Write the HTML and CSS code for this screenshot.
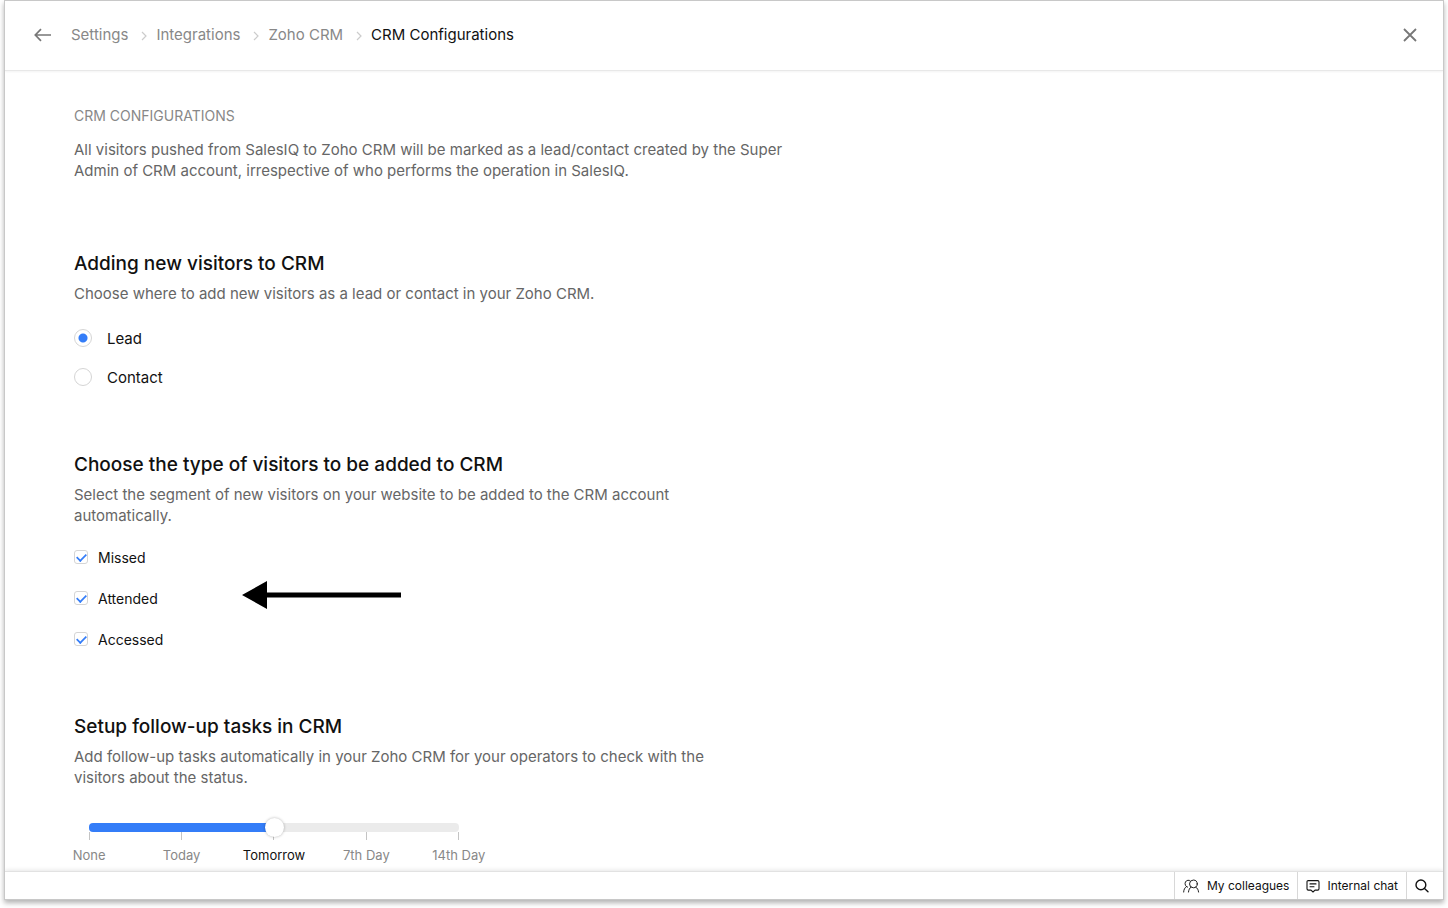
FILE: index.html
```html
<!DOCTYPE html>
<html lang="en">
<head>
    <meta charset="UTF-8">
    <meta name="viewport" content="width=device-width, initial-scale=1.0">
    <title>CRM Configurations</title>
    <link rel="stylesheet" href="styles.css">
</head>
<body>
    <div class="window">
        <header class="topbar">
            <button class="icon-btn" type="button" aria-label="Back">
                <svg width="18" height="14" viewBox="0 0 18 14" fill="none" stroke="currentColor" stroke-width="1.7"><path d="M17 7H1.5M7 1.2L1.3 7L7 12.8"/></svg>
            </button>
            <nav class="breadcrumb" aria-label="Breadcrumb">
                <a href="#">Settings</a>
                <svg class="sep" width="6" height="10" viewBox="0 0 6 10"><path d="M1 1l4 4-4 4"/></svg>
                <a href="#">Integrations</a>
                <svg class="sep" width="6" height="10" viewBox="0 0 6 10"><path d="M1 1l4 4-4 4"/></svg>
                <a href="#">Zoho CRM</a>
                <svg class="sep" width="6" height="10" viewBox="0 0 6 10"><path d="M1 1l4 4-4 4"/></svg>
                <span class="current">CRM Configurations</span>
            </nav>
            <button class="icon-btn close" type="button" aria-label="Close">
                <svg width="14" height="14" viewBox="0 0 14 14" fill="none" stroke="currentColor" stroke-width="1.8"><path d="M1 1l12 12M13 1L1 13"/></svg>
            </button>
        </header>

        <main class="content">
            <section class="intro">
                <h1>CRM CONFIGURATIONS</h1>
                <p>All visitors pushed from SalesIQ to Zoho CRM will be marked as a lead/contact created by the Super Admin of CRM account, irrespective of who performs the operation in SalesIQ.</p>
            </section>

            <section class="setting">
                <h2>Adding new visitors to CRM</h2>
                <p>Choose where to add new visitors as a lead or contact in your Zoho CRM.</p>
                <div class="options radios">
                    <label><input type="radio" name="addAs" checked>Lead</label>
                    <label><input type="radio" name="addAs">Contact</label>
                </div>
            </section>

            <section class="setting">
                <h2>Choose the type of visitors to be added to CRM</h2>
                <p>Select the segment of new visitors on your website to be added to the CRM account automatically.</p>
                <div class="options checks">
                    <label><input type="checkbox" checked>Missed</label>
                    <label><input type="checkbox" checked>Attended</label>
                    <label><input type="checkbox" checked>Accessed</label>
                    <svg class="pointer" width="159" height="28" viewBox="0 0 159 28"><path d="M0 14L25 0v11.500h134v5H25V28z"/></svg>
                </div>
            </section>

            <section class="setting">
                <h2 id="followup">Setup follow-up tasks in CRM</h2>
                <p>Add follow-up tasks automatically in your Zoho CRM for your operators to check with the visitors about the status.</p>
                <div class="slider">
                    <input type="range" min="0" max="4" value="2" aria-labelledby="followup">
                    <ul class="ticks">
                        <li>None</li>
                        <li>Today</li>
                        <li class="active">Tomorrow</li>
                        <li>7th Day</li>
                        <li>14th Day</li>
                    </ul>
                </div>
            </section>
        </main>

        <footer class="bottombar">
            <button type="button">
                <svg width="17" height="14" viewBox="0 0 18 14" fill="none" stroke="currentColor" stroke-width="1" stroke-linecap="round"><circle cx="11" cy="4.800" r="4.100"/><path d="M5.800 13.400C6 11 7 9.300 8.500 8.100M13.500 8.100c1.700 1.200 2.800 2.900 3 5.300M6.800 1C4.300.3 2.200 2 2.200 4.500c0 1.300.6 2.400 1.500 3.100C1.900 8.800.8 10.700.7 13.400M3.700 7.600l1.200.6"/></svg>
                My colleagues
            </button>
            <button type="button">
                <svg width="14" height="14" viewBox="0 0 14 14" fill="none" stroke="currentColor" stroke-width="1.100" stroke-linecap="round" stroke-linejoin="round"><path d="M2.300 1.600h9.400a1.300 1.300 0 0 1 1.300 1.300v6.900a1.300 1.300 0 0 1-1.300 1.300H9L7 13l-2-1.900H2.300A1.300 1.300 0 0 1 1 9.800V2.900a1.300 1.300 0 0 1 1.300-1.300zM4 4.900h6M4 7.700h4"/></svg>
                Internal chat
            </button>
            <button class="search" type="button" aria-label="Search">
                <svg width="14" height="14" viewBox="0 0 14 14" fill="none" stroke="currentColor" stroke-width="1.400" stroke-linecap="round"><circle cx="5.900" cy="5.900" r="4.900"/><path d="M9.500 9.500l3.500 3.300"/></svg>
            </button>
        </footer>
    </div>
</body>
</html>
```
FILE: styles.css
```css
* {
    box-sizing: border-box;
}
body {
    margin: 0;
    background: #fff;
    color: #111;
    font-family: Inter, "Liberation Sans", sans-serif;
    font-size: 15px;
    line-height: 21px;
}
h1, h2, p, ul {
    margin: 0;
    padding: 0;
}
button {
    font: inherit;
    color: inherit;
    background: none;
    border: none;
    padding: 0;
    cursor: pointer;
}
svg {
    display: block;
    flex: none;
}

.window {
    display: flex;
    flex-direction: column;
    height: calc(100vh - 8px);
    margin: 0 4px 8px;
    border: 1px solid #c8c8c8;
    box-shadow: 0 3px 5px rgba(0, 0, 0, 0.3);
    overflow: hidden;
}

/* top bar */
.topbar {
    display: flex;
    align-items: center;
    flex: none;
    height: 70px;
    padding: 0 26px 2px 29px;
    border-bottom: 1px solid #e8e8e8;
    box-shadow: 0 1px 2px rgba(0, 0, 0, 0.05);
}
.icon-btn {
    color: #777;
}
.close {
    margin-left: auto;
}
.breadcrumb {
    display: flex;
    align-items: center;
    margin-left: 19px;
}
.breadcrumb a {
    color: #888;
    text-decoration: none;
}
.sep {
    margin: 2px 9px 0 13px;
    fill: none;
    stroke: #ccc;
    stroke-width: 1.2;
}

/* content */
.content {
    flex: 1;
    min-height: 0;
    overflow: hidden;
    padding: 34px 69px 0;
}
.content p {
    max-width: 730px;
    color: #666;
}
.intro h1 {
    margin-bottom: 13px;
    font-size: 14px;
    font-weight: 400;
    color: #888;
}
.intro {
    padding-bottom: 5px;
}
.setting {
    margin-top: 64px;
}
.setting h2 {
    margin-bottom: 5px;
    font-size: 19px;
    line-height: 28px;
    font-weight: 500;
}
.setting p {
    max-width: 660px;
}
.options {
    display: flex;
    flex-direction: column;
    align-items: flex-start;
    position: relative;
}
.options label {
    display: flex;
    align-items: center;
    height: 20px;
    cursor: pointer;
}
.options input {
    appearance: none;
    margin: 0;
    background: #fff center no-repeat;
    border: 1px solid #d5d5d5;
}
.radios {
    gap: 19px;
    margin-top: 24px;
}
.radios label {
    gap: 15px;
}
.radios input {
    width: 18px;
    height: 18px;
    border-radius: 50%;
}
.radios input:checked {
    background-image: radial-gradient(circle, #347df8 0 4px, transparent 5px);
}
.checks {
    gap: 21px;
    margin-top: 21px;
    font-size: 14px;
}
.checks label {
    gap: 10px;
}
.checks input {
    display: flex;
    align-items: center;
    justify-content: center;
    width: 14px;
    height: 14px;
    border-radius: 3px;
}
.checks input:checked::before {
    content: "";
    width: 9px;
    height: 5px;
    margin-bottom: 2px;
    border: solid #347df8;
    border-width: 0 0 2px 2px;
    transform: rotate(-45deg) scale(0.85);
}
/* arrow over the visitor types */
.pointer {
    position: absolute;
    left: 168px;
    top: 34px;
}

/* slider */
.slider {
    width: 370px;
    margin: 35px 0 0 15px;
}
.slider input {
    appearance: none;
    display: block;
    width: 100%;
    height: 9px;
    margin: 0;
    border-radius: 4px;
    background: linear-gradient(to right, #347df8 50%, #ebebeb 50%);
}
.slider input::-webkit-slider-thumb {
    appearance: none;
    position: relative;
    width: 19px;
    height: 19px;
    border-radius: 50%;
    background: #fff;
    box-shadow: 0 0 3px rgba(0, 0, 0, 0.3);
}
.ticks {
    display: grid;
    grid-template-columns: repeat(5, 1fr);
    margin: 0 -46px;
    list-style: none;
    font-size: 13px;
    line-height: 20px;
    color: #888;
    text-align: center;
}
.ticks li::before {
    content: "";
    display: block;
    width: 1px;
    height: 8px;
    margin: 0 auto 5px;
    background: #c4c4c4;
}
.ticks .active {
    color: #111;
}

/* bottom bar */
.bottombar {
    display: flex;
    justify-content: flex-end;
    position: relative;
    flex: none;
    height: 28px;
    background: #fff;
    border-top: 1px solid #e2e2e2;
    box-shadow: 0 -1px 4px rgba(0, 0, 0, 0.1);
    font-size: 12px;
}
.bottombar button {
    display: flex;
    align-items: center;
    gap: 7px;
    padding: 0 8px;
    border-left: 1px solid #d8d8d8;
}
.bottombar .search {
    width: 37px;
}
```
